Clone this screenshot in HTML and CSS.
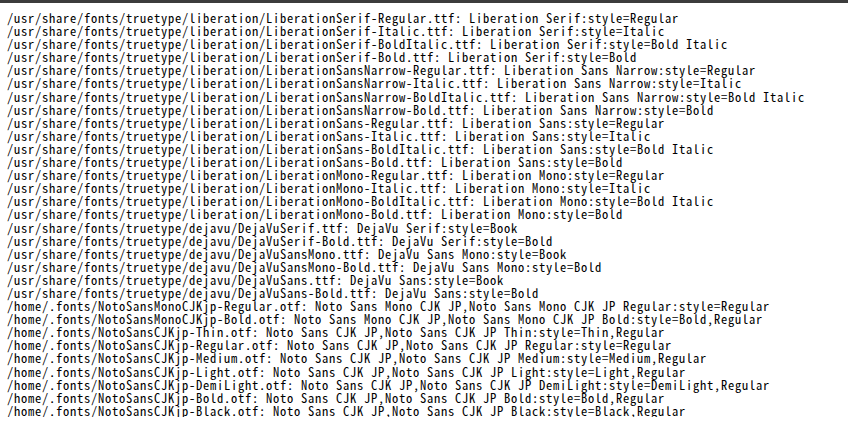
FILE: index.html
```html
<!DOCTYPE html>
<html>
<head>
<meta charset="utf-8">
<link rel="stylesheet" href="styles.css">
</head>
<body>
<div class="topbar"></div>
<pre class="listing">/usr/share/fonts/truetype/liberation/LiberationSerif-Regular.ttf: Liberation Serif:style=Regular
/usr/share/fonts/truetype/liberation/LiberationSerif-Italic.ttf: Liberation Serif:style=Italic
/usr/share/fonts/truetype/liberation/LiberationSerif-BoldItalic.ttf: Liberation Serif:style=Bold Italic
/usr/share/fonts/truetype/liberation/LiberationSerif-Bold.ttf: Liberation Serif:style=Bold
/usr/share/fonts/truetype/liberation/LiberationSansNarrow-Regular.ttf: Liberation Sans Narrow:style=Regular
/usr/share/fonts/truetype/liberation/LiberationSansNarrow-Italic.ttf: Liberation Sans Narrow:style=Italic
/usr/share/fonts/truetype/liberation/LiberationSansNarrow-BoldItalic.ttf: Liberation Sans Narrow:style=Bold Italic
/usr/share/fonts/truetype/liberation/LiberationSansNarrow-Bold.ttf: Liberation Sans Narrow:style=Bold
/usr/share/fonts/truetype/liberation/LiberationSans-Regular.ttf: Liberation Sans:style=Regular
/usr/share/fonts/truetype/liberation/LiberationSans-Italic.ttf: Liberation Sans:style=Italic
/usr/share/fonts/truetype/liberation/LiberationSans-BoldItalic.ttf: Liberation Sans:style=Bold Italic
/usr/share/fonts/truetype/liberation/LiberationSans-Bold.ttf: Liberation Sans:style=Bold
/usr/share/fonts/truetype/liberation/LiberationMono-Regular.ttf: Liberation Mono:style=Regular
/usr/share/fonts/truetype/liberation/LiberationMono-Italic.ttf: Liberation Mono:style=Italic
/usr/share/fonts/truetype/liberation/LiberationMono-BoldItalic.ttf: Liberation Mono:style=Bold Italic
/usr/share/fonts/truetype/liberation/LiberationMono-Bold.ttf: Liberation Mono:style=Bold
/usr/share/fonts/truetype/dejavu/DejaVuSerif.ttf: DejaVu Serif:style=Book
/usr/share/fonts/truetype/dejavu/DejaVuSerif-Bold.ttf: DejaVu Serif:style=Bold
/usr/share/fonts/truetype/dejavu/DejaVuSansMono.ttf: DejaVu Sans Mono:style=Book
/usr/share/fonts/truetype/dejavu/DejaVuSansMono-Bold.ttf: DejaVu Sans Mono:style=Bold
/usr/share/fonts/truetype/dejavu/DejaVuSans.ttf: DejaVu Sans:style=Book
/usr/share/fonts/truetype/dejavu/DejaVuSans-Bold.ttf: DejaVu Sans:style=Bold
/home/.fonts/NotoSansMonoCJKjp-Regular.otf: Noto Sans Mono CJK JP,Noto Sans Mono CJK JP Regular:style=Regular
/home/.fonts/NotoSansMonoCJKjp-Bold.otf: Noto Sans Mono CJK JP,Noto Sans Mono CJK JP Bold:style=Bold,Regular
/home/.fonts/NotoSansCJKjp-Thin.otf: Noto Sans CJK JP,Noto Sans CJK JP Thin:style=Thin,Regular
/home/.fonts/NotoSansCJKjp-Regular.otf: Noto Sans CJK JP,Noto Sans CJK JP Regular:style=Regular
/home/.fonts/NotoSansCJKjp-Medium.otf: Noto Sans CJK JP,Noto Sans CJK JP Medium:style=Medium,Regular
/home/.fonts/NotoSansCJKjp-Light.otf: Noto Sans CJK JP,Noto Sans CJK JP Light:style=Light,Regular
/home/.fonts/NotoSansCJKjp-DemiLight.otf: Noto Sans CJK JP,Noto Sans CJK JP DemiLight:style=DemiLight,Regular
/home/.fonts/NotoSansCJKjp-Bold.otf: Noto Sans CJK JP,Noto Sans CJK JP Bold:style=Bold,Regular
/home/.fonts/NotoSansCJKjp-Black.otf: Noto Sans CJK JP,Noto Sans CJK JP Black:style=Black,Regular</pre>
</body>
</html>
```
FILE: styles.css
```css
html, body {
  margin: 0;
  padding: 0;
  background: #ffffff;
}

.topbar {
  height: 3px;
  background: #3c3c3c;
}

.listing {
  margin: 8px 0 0 7px;
  font-family: "Noto Sans Mono CJK JP", "DejaVu Sans Mono", monospace;
  font-size: 12.5px;
  letter-spacing: 0.75px;
  line-height: 13.1px;
  color: #000000;
  white-space: pre;
}
```
